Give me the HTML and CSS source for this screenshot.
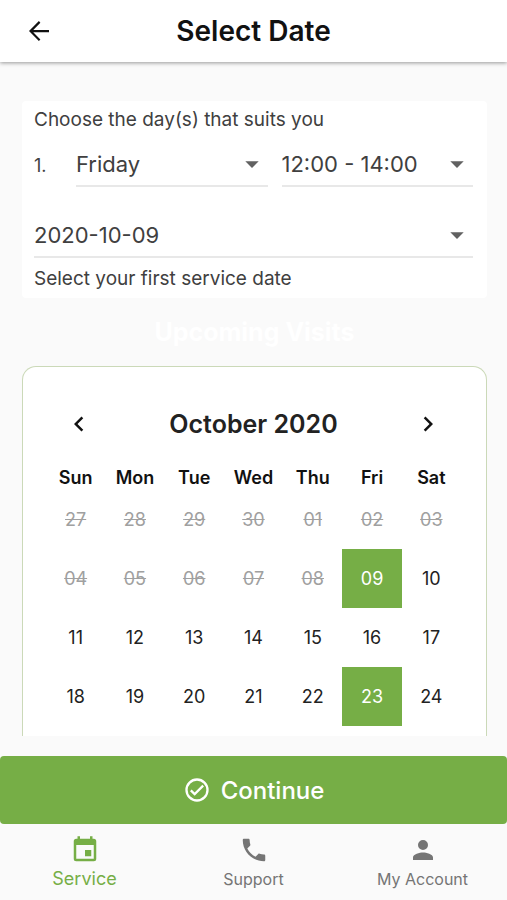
FILE: index.html
```html
<!DOCTYPE html>
<html lang="en">
<head>
<meta charset="utf-8">
<meta name="viewport" content="width=device-width, initial-scale=1">
<title>Select Date</title>
<link rel="stylesheet" href="styles.css">
</head>
<body>
<header class="app-bar">
  <button class="icon-button" type="button" aria-label="Back">
    <svg class="icon" viewBox="0 0 24 24"><path d="M20 11.1H7.4l5.7-5.8L11.9 4 4 12l7.9 8 1.2-1.3-5.7-5.8H20z"/></svg>
  </button>
  <h1 class="app-title">Select Date</h1>
</header>

<main class="content">
  <form class="card">
    <p class="label">Choose the day(s) that suits you</p>
    <div class="slot">
      <span class="slot-number">1.</span>
      <div class="field">
        <select class="select" aria-label="Day"><option>Friday</option></select>
        <svg class="caret" viewBox="0 0 24 24"><path d="M7 10l5 5 5-5z"/></svg>
      </div>
      <div class="field">
        <select class="select" aria-label="Time"><option>12:00 - 14:00</option></select>
        <svg class="caret" viewBox="0 0 24 24"><path d="M7 10l5 5 5-5z"/></svg>
      </div>
    </div>
    <div class="field field-date">
      <select class="select" id="first-date"><option>2020-10-09</option></select>
      <svg class="caret" viewBox="0 0 24 24"><path d="M7 10l5 5 5-5z"/></svg>
    </div>
    <label class="label" for="first-date">Select your first service date</label>
  </form>

  <h2 class="section-title">Upcoming Visits</h2>

  <section class="calendar">
    <div class="month-bar">
      <button class="icon-button" type="button" aria-label="Previous month">
        <svg class="icon" viewBox="0 0 24 24"><path d="M15.4 7.4L14 6l-6 6 6 6 1.4-1.4-4.6-4.6z"/></svg>
      </button>
      <h3 class="month">October 2020</h3>
      <button class="icon-button" type="button" aria-label="Next month">
        <svg class="icon" viewBox="0 0 24 24"><path d="M10 6L8.6 7.4l4.6 4.6-4.6 4.6L10 18l6-6z"/></svg>
      </button>
    </div>
    <table class="days">
      <thead>
        <tr><th>Sun</th><th>Mon</th><th>Tue</th><th>Wed</th><th>Thu</th><th>Fri</th><th>Sat</th></tr>
      </thead>
      <tbody>
        <tr>
          <td><button class="day" disabled>27</button></td><td><button class="day" disabled>28</button></td><td><button class="day" disabled>29</button></td><td><button class="day" disabled>30</button></td><td><button class="day" disabled>01</button></td><td><button class="day" disabled>02</button></td><td><button class="day" disabled>03</button></td>
        </tr>
        <tr>
          <td><button class="day" disabled>04</button></td><td><button class="day" disabled>05</button></td><td><button class="day" disabled>06</button></td><td><button class="day" disabled>07</button></td><td><button class="day" disabled>08</button></td><td><button class="day selected">09</button></td><td><button class="day">10</button></td>
        </tr>
        <tr>
          <td><button class="day">11</button></td><td><button class="day">12</button></td><td><button class="day">13</button></td><td><button class="day">14</button></td><td><button class="day">15</button></td><td><button class="day">16</button></td><td><button class="day">17</button></td>
        </tr>
        <tr>
          <td><button class="day">18</button></td><td><button class="day">19</button></td><td><button class="day">20</button></td><td><button class="day">21</button></td><td><button class="day">22</button></td><td><button class="day selected">23</button></td><td><button class="day">24</button></td>
        </tr>
      </tbody>
    </table>
  </section>
</main>

<button class="continue" type="button">
  <svg class="continue-icon" viewBox="0 0 24 24"><path d="M16.6 7.6L10 14.2l-2.6-2.6L6 13l4 4 8-8zM12 2a10 10 0 1 0 0 20 10 10 0 0 0 0-20zm0 18a8 8 0 1 1 0-16 8 8 0 0 1 0 16z"/></svg>
  Continue
</button>

<nav class="tabs">
  <a class="tab active" href="#service">
    <svg class="icon" viewBox="0 0 24 24"><path d="M17 12h-5v5h5zM16 1v2H8V1H6v2H5a2 2 0 0 0-2 2v14a2 2 0 0 0 2 2h14a2 2 0 0 0 2-2V5a2 2 0 0 0-2-2h-1V1zm3 18H5V8h14z"/></svg>
    Service
  </a>
  <a class="tab" href="#support">
    <svg class="icon" viewBox="0 0 24 24"><path d="M6.62 10.79a15.1 15.1 0 0 0 6.59 6.59l2.2-2.2c.27-.27.67-.36 1.02-.24 1.12.37 2.33.57 3.57.57.55 0 1 .45 1 1V20c0 .55-.45 1-1 1C10.61 21 3 13.39 3 4c0-.55.45-1 1-1h3.5c.55 0 1 .45 1 1 0 1.25.2 2.45.57 3.57.11.35.03.74-.25 1.02z"/></svg>
    Support
  </a>
  <a class="tab" href="#account">
    <svg class="icon" viewBox="0 0 24 24"><path d="M12 12a4 4 0 1 0 0-8 4 4 0 0 0 0 8zm0 2c-2.67 0-8 1.34-8 4v2h16v-2c0-2.66-5.33-4-8-4z"/></svg>
    My Account
  </a>
</nav>
</body>
</html>
```
FILE: styles.css
```css
* { box-sizing: border-box; }

body {
  margin: 0;
  min-height: 100vh;
  display: flex;
  flex-direction: column;
  background: #fafafa;
  color: #404040;
  font-family: Inter, "Liberation Sans", sans-serif;
  font-size: 19px;
}

h1, h2, h3, p { margin: 0; }

button {
  margin: 0;
  padding: 0;
  border: 0;
  background: none;
  color: inherit;
  font: inherit;
}

svg { display: block; fill: currentColor; }

.icon { width: 30px; height: 30px; }

.icon-button { color: #111; }

.app-bar {
  display: grid;
  grid-template-columns: 30px 1fr 30px;
  align-items: center;
  height: 62px;
  padding: 0 24px;
  background: #fff;
  box-shadow: 0 1px 4px rgba(0, 0, 0, 0.4);
}

.app-title {
  color: #111;
  font-size: 28px;
  font-weight: 600;
  line-height: 32px;
  text-align: center;
}

.content {
  flex: 1;
  display: flex;
  flex-direction: column;
  padding: 39px 20px 20px 22px;
}

.card {
  padding: 8px 14px 8px 12px;
  border-radius: 4px;
  background: #fff;
}

.label {
  display: block;
  font-size: 19px;
  line-height: 22px;
}

.slot {
  display: grid;
  grid-template-columns: 28px 1fr 1fr;
  align-items: center;
  column-gap: 14px;
  margin-top: 12px;
}

.slot-number { font-size: 18px; }

.field {
  position: relative;
  border-bottom: 2px solid #e8e8e8;
}

.field-date { margin: 27px 0 10px; }

.select {
  display: block;
  width: 100%;
  height: 42px;
  padding: 0 32px 0 0;
  border: 0;
  background: none;
  appearance: none;
  color: #404040;
  font: inherit;
  font-size: 22px;
}

.caret {
  position: absolute;
  top: 5px;
  right: 0;
  width: 32px;
  height: 32px;
  fill: #616161;
  pointer-events: none;
}

.section-title {
  margin: 18px 0;
  color: #fff;
  font-size: 25px;
  font-weight: 700;
  line-height: 32px;
  text-align: center;
}

.calendar {
  flex: 1;
  padding: 37px 25px 9px 23px;
  border: 1px solid #cbd9b8;
  border-bottom: 0;
  border-radius: 14px 14px 0 0;
  background: #fff;
}

.month-bar {
  display: flex;
  align-items: center;
  justify-content: space-between;
  height: 40px;
  padding: 0 18px;
}

.month {
  color: #222;
  font-size: 25px;
  font-weight: 600;
}

.days {
  width: 100%;
  margin-top: 22px;
  border-collapse: collapse;
  table-layout: fixed;
}

.days th {
  height: 24px;
  padding: 0;
  color: #111;
  font-size: 18px;
  font-weight: 600;
  line-height: 24px;
}

.days td { padding: 0; }

.day {
  display: block;
  width: 100%;
  height: 59px;
  color: #222;
  font-size: 18px;
  text-align: center;
}

.day:disabled {
  color: #a0a0a0;
  text-decoration: line-through;
}

.day.selected {
  background: #76ae46;
  color: #fff;
}

.continue {
  display: flex;
  align-items: center;
  justify-content: center;
  gap: 10px;
  height: 68px;
  border-radius: 4px;
  background: #76ae46;
  color: #fff;
  font-size: 24px;
  font-weight: 500;
}

.continue-icon { width: 28px; height: 28px; }

.tabs {
  display: grid;
  grid-template-columns: repeat(3, 1fr);
  height: 76px;
}

.tab {
  display: flex;
  flex-direction: column;
  align-items: center;
  gap: 3px;
  padding-top: 11px;
  color: #757575;
  font-size: 16px;
  line-height: 22px;
  text-decoration: none;
}

.tab.active {
  color: #76ae46;
  font-size: 18px;
}
```
